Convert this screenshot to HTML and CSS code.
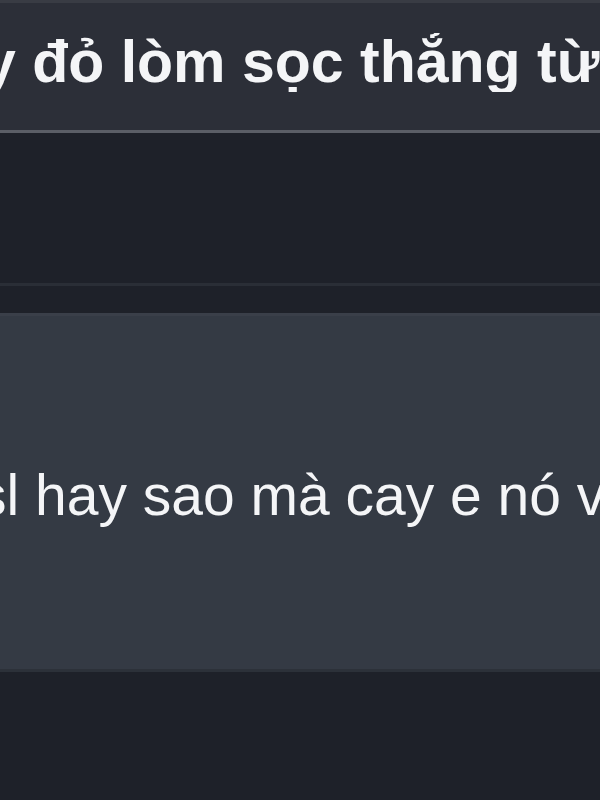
FILE: index.html
```html
<!DOCTYPE html>
<html lang="vi">
<head>
    <meta charset="UTF-8">
    <meta name="viewport" content="width=device-width, initial-scale=1.0">
    <title>Thread</title>
    <link rel="stylesheet" href="styles.css">
</head>
<body>
    <div class="thread-header">
        <h1 class="thread-title">y đỏ lòm sọc thẳng từ</h1>
    </div>
    <div class="gap-block"></div>
    <div class="gap-small"></div>
    <div class="post">
        <p class="post-text">sl hay sao mà cay e nó va</p>
    </div>
    <div class="after-post"></div>
</body>
</html>
```
FILE: styles.css
```css
html, body {
    margin: 0;
    padding: 0;
}
body {
    background-color: #1e2129;
    font-family: "Liberation Sans", Arial, sans-serif;
    color: #f4f5f7;
    overflow: hidden;
}
.thread-header {
    background-color: #2c2f38;
    border-top: 3px solid #393c44;
    border-bottom: 3px solid #5b5e66;
    height: 97px;
    padding-top: 30px;
}
.thread-title {
    margin: 0;
    font-size: 59px;
    font-weight: bold;
    white-space: nowrap;
    text-indent: -17px;
    overflow: hidden;
    line-height: 1;
}
.gap-block {
    height: 150px;
    border-bottom: 3px solid #2a2e36;
}
.gap-small {
    height: 27px;
}
.post {
    background-color: #343a44;
    border-top: 3px solid #3a3f49;
    border-bottom: 3px solid #2c3139;
    height: 202px;
    padding-top: 151px;
}
.post-text {
    margin: 0;
    font-size: 57px;
    white-space: nowrap;
    text-indent: -22px;
    line-height: 1;
}
.after-post {
    height: 130px;
}
```
